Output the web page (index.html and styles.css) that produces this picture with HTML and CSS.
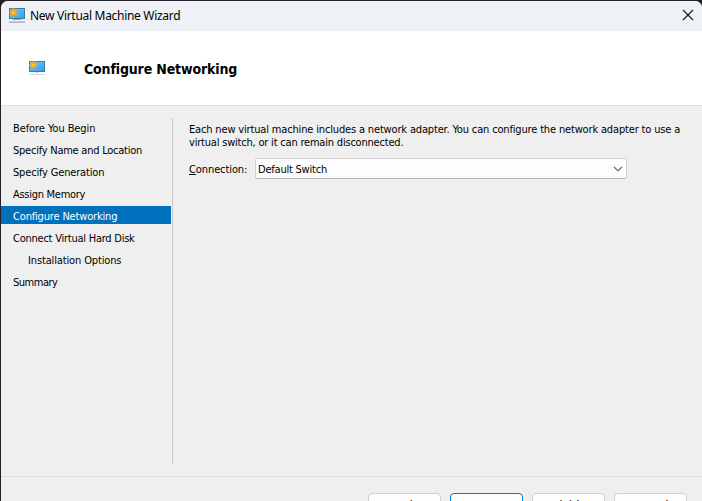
FILE: index.html
```html
<!DOCTYPE html>
<html lang="en">
<head>
<meta charset="utf-8">
<title>New Virtual Machine Wizard</title>
<link rel="stylesheet" href="styles.css">
</head>
<body>
<svg class="defs" width="0" height="0" aria-hidden="true">
  <defs>
    <linearGradient id="screen" x1="0" y1="0" x2="1" y2="1">
      <stop offset="0" stop-color="#6dd0ff"/><stop offset="1" stop-color="#26a0f5"/>
    </linearGradient>
    <symbol id="star" viewBox="0 0 9 9">
      <path d="M4.5 0V9M0 4.5H9M1.2 1.2L7.8 7.8M7.8 1.2L1.2 7.8" stroke="#eca32c" stroke-width="1.5"/>
      <circle cx="4.5" cy="4.5" r="2.6" fill="#ffaa18"/><circle cx="4.5" cy="4.5" r="1" fill="#ffd774"/>
    </symbol>
  </defs>
</svg>
<div class="window">
  <header class="titlebar">
    <svg class="app-icon" width="16" height="15" viewBox="0 0 16 15">
      <rect x=".5" y=".5" width="15" height="10" fill="url(#screen)" stroke="#427b9c"/>
      <path d="M6 11h4v1H6z" fill="#b9cbd8"/><path d="M4 11.5h8" stroke="#8298a8" stroke-width=".8"/>
      <path d="M0 14.1h16" stroke="#92a6b8" stroke-width="1.2"/>
      <use href="#star" x="0" y="0" width="9" height="9"/>
    </svg>
    <span class="title">New Virtual Machine Wizard</span>
    <svg class="close" width="12" height="12" viewBox="0 0 12 12"><path d="M1 1L11 11M11 1L1 11" stroke="#191919" stroke-width="1.15"/></svg>
  </header>
  <section class="banner">
    <svg class="banner-icon" width="16" height="15" viewBox="0 0 16 15">
      <rect x=".5" y=".5" width="15" height="10" fill="url(#screen)" stroke="#427b9c"/>
      <path d="M7 11h2v1H7z" fill="#c3d1db"/><path d="M0 13.5h16" stroke="#d5dce1"/>
      <use href="#star" x="0" y="-.5" width="9" height="9"/>
    </svg>
    <h1>Configure Networking</h1>
  </section>
  <main class="content">
    <nav class="steps">
      <a class="step begin">Before You Begin</a>
      <a class="step">Specify Name and Location</a>
      <a class="step generation">Specify Generation</a>
      <a class="step memory">Assign Memory</a>
      <a class="step current">Configure Networking</a>
      <a class="step">Connect Virtual Hard Disk</a>
      <a class="step sub">Installation Options</a>
      <a class="step summary">Summary</a>
    </nav>
    <section class="page">
      <p>Each new virtual machine includes a network adapter. You can configure the network adapter to use a<br><span class="line2">virtual switch, or it can remain disconnected.</span></p>
      <div class="field">
        <label><u>C</u>onnection:</label>
        <div class="select"><span>Default Switch</span>
          <svg width="10" height="6" viewBox="0 0 10 6"><path d="M1 .8L5 4.8L9 .8" fill="none" stroke="#555" stroke-width="1.1"/></svg>
        </div>
      </div>
    </section>
  </main>
  <footer class="actions">
    <button>&lt; Previous</button>
    <button class="primary">Next &gt;</button>
    <button>Finish</button>
    <button>Cancel</button>
  </footer>
</div>
</body>
</html>
```
FILE: styles.css
```css
* { box-sizing: border-box; }
html, body { margin: 0; height: 501px; overflow: hidden; }
body { background: #242226; font: 11px/13px "DejaVu Sans Condensed", "Noto Sans", sans-serif; letter-spacing: -.16px; color: #000; }
.defs { position: absolute; }
.window { height: 500px; margin: 1px 0 0 1px; display: flex; flex-direction: column; background: #efefef; border-radius: 7px 7px 0 0; overflow: hidden; }
.titlebar { height: 30px; flex: none; display: flex; align-items: center; padding: 0 8px; background: #eef2f7; }
.app-icon { margin: -1px 5px 0 0; }
.title { flex: 1; font: 12px/16px "Noto Sans", sans-serif; letter-spacing: -.3px; white-space: nowrap; }
.close { margin-top: -2px; }
.banner { height: 75px; flex: none; display: flex; align-items: center; padding-left: 28px; background: #fff; border-bottom: 1px solid #dedede; }
h1 { margin: 2px 0 0 39px; font: bold 14px/18px "DejaVu Sans Condensed", sans-serif; letter-spacing: -.15px; white-space: nowrap; }
.content { flex: 1; display: flex; padding: 12px 0; }
.steps { width: 172px; height: 346px; border-right: 1px solid #c9c9c9; }
.step { display: flex; align-items: center; width: 170px; height: 18px; margin-bottom: 4px; padding: 2px 0 0 12px; letter-spacing: -.24px; white-space: nowrap; }
.step.begin { letter-spacing: -.08px; }
.step.generation { letter-spacing: -.17px; }
.step.memory { letter-spacing: -.28px; }
.step.current { background: #0071bd; color: #fff; letter-spacing: -.17px; }
.step.sub { padding-left: 27px; letter-spacing: -.14px; }
.step.summary { letter-spacing: -.48px; }
.page { padding: 5px 0 0 16px; }
.page p { margin: 0; white-space: nowrap; }
.line2 { letter-spacing: -.2px; }
.field { display: flex; align-items: center; margin-top: 9px; }
label { width: 66px; padding-top: 1px; letter-spacing: -.1px; white-space: nowrap; }
.select { display: flex; align-items: center; justify-content: space-between; width: 372px; height: 21px; padding: 0 3px 0 2px; background: #fdfdfd; border: 1px solid #cfcfcf; border-bottom-color: #b5b5b5; border-radius: 2px; }
.select span { padding-top: 1px; letter-spacing: -.22px; }
.actions { height: 25px; flex: none; display: flex; justify-content: flex-end; gap: 9px; padding: 16px 15px 0 0; border-top: 1px solid #dedede; }
button { flex: none; width: 73px; height: 24px; padding: 0; background: #fdfdfd; border: 1px solid #d0d0d0; border-radius: 4px; font: 13px/14px "Noto Sans", sans-serif; color: #000; letter-spacing: -1px; }
button.primary { border-color: #0078d4; }
```
